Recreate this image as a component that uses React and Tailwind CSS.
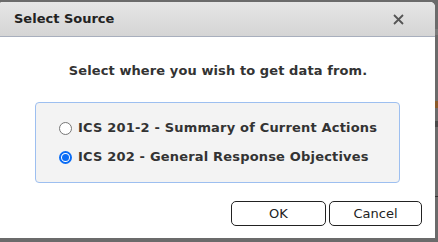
import React from "react";

function Radio({ checked }) {
  return checked ? (
    <span className="flex h-[13px] w-[13px] items-center justify-center rounded-full border-2 border-[#0a6cf5] bg-white">
      <span className="h-[7px] w-[7px] rounded-full bg-[#0a6cf5]" />
    </span>
  ) : (
    <span className="h-[13px] w-[13px] rounded-full border border-[#767676] bg-white" />
  );
}

export default function App() {
  return (
    <div
      className="relative h-[242px] w-[438px] overflow-hidden bg-[#6b6b6b] pt-[2px]"
      style={{ fontFamily: '"DejaVu Sans", Verdana, sans-serif' }}
    >
      <div className="absolute right-0 top-[29px] h-[6px] w-[3px] bg-[#7a7a7a]" />
      <div className="absolute right-0 top-[101px] h-[7px] w-[3px] bg-[#8a5a2a]" />
      <div className="absolute right-0 top-[121px] h-[6px] w-[3px] bg-[#4a4a4a]" />
      <div className="absolute right-0 top-[196px] h-[1px] w-[3px] bg-[#333]" />
      <div className="flex h-[236px] w-[435px] flex-col overflow-hidden rounded-tr-[5px] rounded-tl-[2px] bg-white">
        <div className="flex h-[35px] shrink-0 items-center justify-between border-b border-[#a8afbd] bg-gradient-to-b from-[#e6e6e6] to-[#d5d5d5] pl-[14px] pr-[31px]">
          <span className="text-[13px] font-bold text-[#222]">Select Source</span>
          <svg width="11" height="11" viewBox="0 0 11 11" className="mt-[1px]">
            <path d="M1 1 L10 10 M10 1 L1 10" stroke="#555" strokeWidth="1.8" />
          </svg>
        </div>
        <div className="flex flex-1 flex-col">
          <div className="mt-[25px] text-center text-[13px] font-bold leading-[18px] tracking-[0.1px] text-[#333] pl-[1px]">
            Select where you wish to get data from.
          </div>
          <div className="ml-[35px] mt-[22px] flex h-[81px] w-[365px] flex-col justify-center gap-[11px] rounded-[4px] border border-[#9dbff0] bg-[#f3f3f3] pl-[23px]">
            <label className="flex items-center gap-[6px] text-[13px] font-bold leading-[18px] tracking-[0.18px] text-[#333]">
              <Radio checked={false} />
              <span>ICS 201-2 - Summary of Current Actions</span>
            </label>
            <label className="flex items-center gap-[6px] text-[13px] font-bold leading-[18px] tracking-[0.18px] text-[#333]">
              <Radio checked />
              <span>ICS 202 - General Response Objectives</span>
            </label>
          </div>
          <div className="mt-[18px] flex justify-end gap-[3px] pr-[13px]">
            <button className="h-[25px] w-[95px] rounded-[5px] border border-[#222] bg-white text-[13px] text-[#222]">
              OK
            </button>
            <button className="h-[25px] w-[93px] rounded-[5px] border border-[#222] bg-white text-[13px] text-[#222]">
              Cancel
            </button>
          </div>
        </div>
      </div>
    </div>
  );
}
